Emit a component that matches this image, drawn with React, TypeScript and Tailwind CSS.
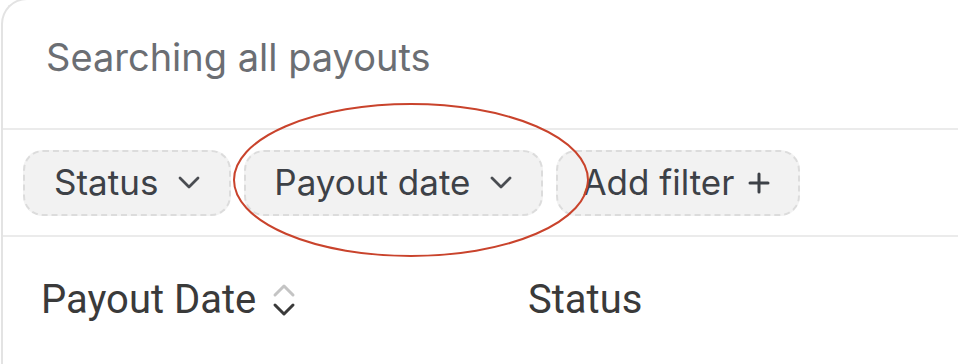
import React from 'react';

const Chevron: React.FC = () => (
  <svg viewBox="0 0 24 15" className="ml-[19px] w-[24px] h-[15px] text-[#4a4d52]" fill="none" stroke="currentColor" strokeWidth={2.8} strokeLinecap="round" strokeLinejoin="round">
    <path d="M3 3l9 9 9-9" />
  </svg>
);

const Plus: React.FC = () => (
  <svg viewBox="0 0 22 22" className="ml-[14px] w-[22px] h-[22px] text-[#3d4147]" fill="none" stroke="currentColor" strokeWidth={3} strokeLinecap="round">
    <path d="M11 2v18M2 11h18" />
  </svg>
);

const FilterPill: React.FC<{ label: string; icon: 'chevron' | 'plus'; pad: string }> = ({ label, icon, pad }) => (
  <button className={`flex items-center h-[66px] ${pad} rounded-[20px] bg-[#f2f2f2] border-2 border-dashed border-[#dcdcdc] text-[#3d4147] text-[35px] leading-none`}>
    <span>{label}</span>
    {icon === 'chevron' ? <Chevron /> : <Plus />}
  </button>
);

export default function App() {
  return (
    <div className="w-[958px] h-[364px] overflow-hidden bg-white" style={{ fontFamily: 'Inter, "Liberation Sans", sans-serif' }}>
      <div className="relative ml-[1px] h-[400px] border-l-2 border-t-2 border-[#e3e3e3] rounded-tl-[26px] -mt-[2px]">
        <div className="h-[128px] pl-[43px] pt-[38px]">
          <span className="text-[38px] leading-none text-[#6b6e73]">Searching all payouts</span>
        </div>
        <div className="border-t-2 border-[#ebebeb] h-[107px] flex items-center gap-[13px] pl-[20px]">
          <FilterPill label="Status" icon="chevron" pad="pl-[29px] pr-[28px]" />
          <FilterPill label="Payout date" icon="chevron" pad="pl-[28px] pr-[28px]" />
          <FilterPill label="Add filter" icon="plus" pad="pl-[24px] pr-[28px]" />
        </div>
        <div className="border-t-2 border-[#ebebeb] flex items-center h-[130px] pb-[2px] text-[#3a3a3a]" style={{ fontFamily: 'Roboto, sans-serif' }}>
          <div className="w-[525px] pl-[38px] flex items-center">
            <span className="text-[40px] leading-none">Payout Date</span>
            <svg viewBox="0 0 24 36" className="ml-[16px] w-[24px] h-[36px]" fill="none" strokeWidth={3} strokeLinecap="round" strokeLinejoin="round">
              <path d="M3 13l9-9 9 9" stroke="#c4c4c4" />
              <path d="M3 23l9 9 9-9" stroke="#3a3a3a" />
            </svg>
          </div>
          <span className="text-[40px] leading-none">Status</span>
        </div>
        <svg className="absolute left-[228px] top-[102px] w-[360px] h-[156px] pointer-events-none" viewBox="0 0 360 156" fill="none">
          <ellipse cx="180" cy="78" rx="177" ry="76" stroke="#c9432c" strokeWidth="2" />
        </svg>
      </div>
    </div>
  );
}
